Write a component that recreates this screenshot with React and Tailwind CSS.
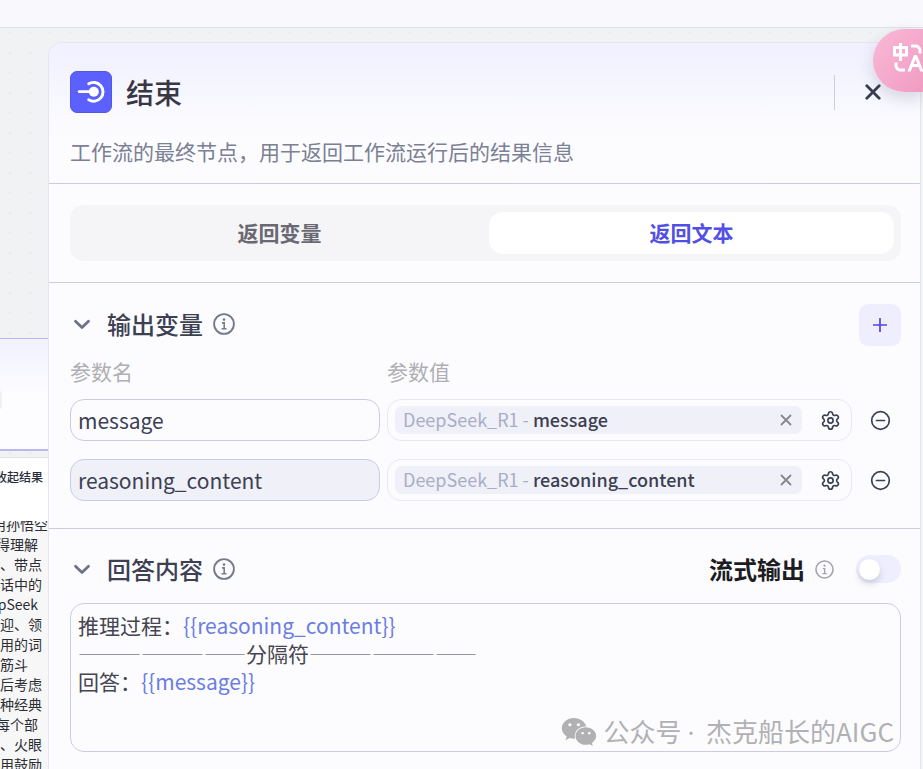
import { useState } from 'react'
import { Settings } from 'lucide-react'
import { FaWeixin } from 'react-icons/fa'
import { RiTranslate } from 'react-icons/ri'

const traceLines = [
  { text: '用孙悟空', pad: 'pr-0' },
  { text: '得理解', pad: 'pr-2.5' },
  { text: '、带点', pad: 'pr-1.5' },
  { text: '话中的', pad: 'pr-1.5' },
  { text: 'pSeek', pad: 'pr-2.5' },
  { text: '迎、领', pad: 'pr-1.5' },
  { text: '用的词', pad: 'pr-1.5' },
  { text: '筋斗', pad: 'pr-5' },
  { text: '后考虑', pad: 'pr-1.5' },
  { text: '种经典', pad: 'pr-1.5' },
  { text: '每个部', pad: 'pr-2.5' },
  { text: '、火眼', pad: 'pr-1.5' },
  { text: '用鼓励', pad: 'pr-1.5' },
]

function ChevronIcon() {
  return (
    <svg width="24" height="24" viewBox="0 0 24 24" fill="none" stroke="#6d7289" strokeWidth="2.8" strokeLinecap="round" strokeLinejoin="round">
      <path d="M5.5 9.2l6.5 6.3 6.5-6.3" />
    </svg>
  )
}

function InfoIcon({ size, className }) {
  return (
    <svg width={size} height={size} viewBox="0 0 24 24" fill="none" stroke="currentColor" strokeWidth="2" className={className}>
      <circle cx="12" cy="12" r="10.8" />
      <circle cx="12" cy="7.2" r="1.4" fill="currentColor" stroke="none" />
      <path d="M9.8 10.8h2.4v6.2M9.4 17.2h5.4" strokeWidth="1.7" />
    </svg>
  )
}

function MinusIcon() {
  return (
    <svg width="21" height="21" viewBox="0 0 21 21" fill="none" stroke="currentColor" strokeWidth="1.7" strokeLinecap="round">
      <circle cx="10.5" cy="10.5" r="8.8" />
      <path d="M6.5 10.5h8" />
    </svg>
  )
}

function EndIcon() {
  return (
    <svg width="42" height="42" viewBox="0 0 42 42" fill="none" stroke="#fff" strokeWidth="2.9" strokeLinecap="round">
      <path d="M9.2 20.6H22" />
      <circle cx="23.8" cy="20.8" r="5" fill="#fff" stroke="none" />
      <path d="M18.7 12.8a9.4 9.4 0 1 1 0 16" />
    </svg>
  )
}

function SectionTitle({ children }) {
  return (
    <div className="flex items-center pb-[2px]">
      <ChevronIcon />
      <h2 className="ml-[13px] text-[24px] font-medium text-[#3c4052]">{children}</h2>
      <InfoIcon size={22} className="ml-[10px] text-[#747990]" />
    </div>
  )
}

function CanvasNodes() {
  return (
    <div className="flex w-12 shrink-0 flex-col overflow-hidden">
      <div className="mt-[310px] flex h-[113px] shrink-0 items-center border-t border-b-2 border-[#bcb8ee] bg-linear-to-b from-[#f1f1ff] to-[#fdfdff] to-50%">
        <div className="mt-3 h-[18px] w-[2px] rounded-r bg-[#f0f0f7]" />
      </div>
      <div className="mt-[6px] flex grow flex-col overflow-hidden border-t border-[#e2e3e8] bg-white">
        <div className="flex shrink-0 justify-end pt-[9px] pr-[5px] pb-[34px] text-[12px] leading-[20px] font-medium whitespace-nowrap text-[#2a2d3c]">
          收起结果
        </div>
        <div className="grow overflow-hidden bg-[#f7f7f7]">
          <div className="-mt-[7px] text-[14px] leading-[20px] text-[#2b2d33]">
            {traceLines.map((line) => (
              <div key={line.text} className={`flex justify-end whitespace-nowrap ${line.pad}`}>
                {line.text}
              </div>
            ))}
          </div>
        </div>
      </div>
    </div>
  )
}

function VariableRow({ variable, highlighted, onRename, onRemove }) {
  return (
    <div className="grid grid-cols-[2fr_3fr_42px] gap-[7px]">
      <input
        aria-label="参数名"
        value={variable.name}
        onChange={(e) => onRename(e.target.value)}
        className={`h-[42px] min-w-0 rounded-[14px] border border-[#cbcce0] px-[7px] text-[21px] text-[#3c4052] outline-none ${
          highlighted ? 'bg-[#f0f0f8]' : 'bg-transparent'
        }`}
      />
      <div className="flex h-[42px] min-w-0 items-center rounded-[14px] border border-[#e7e8f3] pl-[7px]">
        <div className="flex h-7 min-w-0 grow items-center rounded-[7px] bg-[#f0f0f8] pr-[10px] pl-2 text-[18px] leading-[26px]">
          <span className="pb-[2px] whitespace-pre text-[#a9aec6]">DeepSeek_R1 - </span>
          <span className="grow truncate pb-[2px] font-medium text-[#3c4052]">{variable.source}</span>
          <button aria-label="清除" className="text-[#85868f]">
            <svg width="12" height="12" viewBox="0 0 12 12" stroke="currentColor" strokeWidth="1.8" strokeLinecap="round">
              <path d="M1.5 1.5l9 9M10.5 1.5l-9 9" />
            </svg>
          </button>
        </div>
        <button aria-label="设置" className="pr-[10px] pl-[18px] text-[#3c4052]">
          <Settings size={21} strokeWidth={1.9} />
        </button>
      </div>
      <button aria-label="删除" onClick={onRemove} className="flex items-center justify-center text-[#3c4052]">
        <MinusIcon />
      </button>
    </div>
  )
}

export default function App() {
  const [tab, setTab] = useState('返回文本')
  const [streaming, setStreaming] = useState(false)
  const [variables, setVariables] = useState([
    { id: 1, name: 'message', source: 'message' },
    { id: 2, name: 'reasoning_content', source: 'reasoning_content' },
  ])

  const addVariable = () => setVariables((prev) => [...prev, { id: Date.now(), name: '', source: '' }])
  const removeVariable = (id) => setVariables((prev) => prev.filter((v) => v.id !== id))
  const renameVariable = (id, name) => setVariables((prev) => prev.map((v) => (v.id === id ? { ...v, name } : v)))

  return (
    <div
      lang="zh-CN"
      className="relative flex h-screen flex-col overflow-hidden bg-[#f1f2f4] font-['Noto_Sans_CJK_SC',sans-serif]"
    >
      {/* Top bar */}
      <div className="h-7 shrink-0 border-b border-[#dfe0ee] bg-[#f8f8fd]" />

      {/* Canvas */}
      <div className="flex min-h-0 grow bg-[radial-gradient(circle_at_center,#ebecf1_1px,transparent_2px)] bg-size-[20px_20px] bg-position-[0px_-5px]">
        <CanvasNodes />

        {/* Node panel */}
        <div className="mt-[14px] mr-[2px] min-w-0 grow overflow-hidden rounded-t-[14px] border border-b-0 border-[#e4e5f4] bg-[#fcfcff]">
          <div className="border-b border-[#cccde0] bg-linear-to-b from-[#f0f0ff] to-[#fcfcff] to-65% pt-7 pr-[19px] pb-[18px] pl-[21px]">
            <div className="flex items-center">
              <div className="rounded-[7px] border border-[#5459dc] bg-[#5b60ff]">
                <div className="-m-px">
                  <EndIcon />
                </div>
              </div>
              <h1 className="ml-[14px] grow text-[28px] leading-[42px] font-medium text-[#383743]">结束</h1>
              <div className="h-[35px] w-px bg-[#cccde0]" />
              <button aria-label="关闭" className="mr-5 ml-[30px] text-[#3a3d4e]">
                <svg width="16" height="16" viewBox="0 0 16 16" stroke="currentColor" strokeWidth="2.8" strokeLinecap="round">
                  <path d="M1.8 1.8l12.4 12.4M14.2 1.8L1.8 14.2" />
                </svg>
              </button>
            </div>
            <p className="mt-6 text-[21px] leading-[28px] text-[#7b8094]">工作流的最终节点，用于返回工作流运行后的结果信息</p>
          </div>

          <div className="border-b border-[#cccde0] py-[21px] pr-[19px] pl-[21px]">
            <div className="flex gap-[7px] rounded-[14px] bg-[#f5f5f7] p-[7px]">
              {['返回变量', '返回文本'].map((label) => (
                <button
                  key={label}
                  onClick={() => setTab(label)}
                  className={`h-[42px] flex-1 rounded-[14px] text-[21px] font-bold ${
                    tab === label ? 'bg-white text-[#5250e4]' : 'text-[#6a6973]'
                  }`}
                >
                  {label}
                </button>
              ))}
            </div>
          </div>

          {/* Output variables */}
          <div className="border-b border-[#cccde0] pt-[21px] pr-[19px] pb-[27px] pl-[21px]">
            <div className="flex h-[42px] items-center justify-between">
              <SectionTitle>输出变量</SectionTitle>
              <button
                aria-label="添加变量"
                onClick={addVariable}
                className="flex size-[42px] items-center justify-center rounded-[9px] bg-[#eeeeff] text-[#4f46e5]"
              >
                <svg width="14" height="14" viewBox="0 0 14 14" stroke="currentColor" strokeWidth="1.7">
                  <path d="M7 0v14M0 7h14" />
                </svg>
              </button>
            </div>
            <div className="mt-[11px] mb-[14px] grid grid-cols-[2fr_3fr_42px] gap-[7px] text-[21px] leading-[28px] text-[#afafb3]">
              <span>参数名</span>
              <span>参数值</span>
            </div>
            <div className="flex flex-col gap-[18px]">
              {variables.map((v) => (
                <VariableRow
                  key={v.id}
                  variable={v}
                  highlighted={v.id === 2}
                  onRename={(name) => renameVariable(v.id, name)}
                  onRemove={() => removeVariable(v.id)}
                />
              ))}
            </div>
          </div>

          {/* Answer */}
          <div className="pt-5 pr-[19px] pl-[21px]">
            <div className="flex h-[42px] items-center justify-between">
              <SectionTitle>回答内容</SectionTitle>
              <div className="flex items-center pb-[2px]">
                <label htmlFor="streaming" className="text-[24px] font-bold text-[#1c1c23]">
                  流式输出
                </label>
                <InfoIcon size={19} className="ml-[10px] text-[#a3a3ad]" />
                <button
                  id="streaming"
                  role="switch"
                  aria-checked={streaming}
                  onClick={() => setStreaming(!streaming)}
                  className={`ml-[22px] flex h-7 w-[45px] items-center rounded-full px-[3px] ${
                    streaming ? 'justify-end bg-[#5b60ff]' : 'bg-[#eeeeff]'
                  }`}
                >
                  <span className="size-[21px] rounded-full bg-white shadow-[0_4px_7px_rgba(0,0,0,0.15)]" />
                </button>
              </div>
            </div>
            <div
              role="textbox"
              aria-label="回答内容"
              contentEditable
              suppressContentEditableWarning
              className="mt-3 min-h-[149px] rounded-[14px] border border-[#cbcce0] px-[7px] py-[7px] text-[21px] leading-[28px] text-[#45444f] outline-none"
            >
              <p>
                推理过程：<span className="text-[#6b7de3]">{'{{reasoning_content}}'}</span>
              </p>
              <p>
                <span className="text-[#96969e]">————————</span>分隔符<span className="text-[#96969e]">————————</span>
              </p>
              <p>
                回答：<span className="text-[#6b7de3]">{'{{message}}'}</span>
              </p>
            </div>
          </div>
        </div>
      </div>

      {/* Translate bubble */}
      <button
        aria-label="翻译"
        className="absolute top-[29px] right-0 flex h-[63px] w-[50px] items-center overflow-hidden rounded-l-full bg-linear-to-br from-[#f9b9d6] to-[#f09cc4] pb-[6px] pl-[17px] text-white shadow-[0_6px_16px_rgba(60,60,90,0.18)]"
      >
        <RiTranslate size={36} className="shrink-0" />
      </button>

      {/* Account signature */}
      <div className="pointer-events-none absolute right-[29px] bottom-[18px] flex items-center text-[26px] leading-[38px] text-[#b1b1b3]">
        <FaWeixin size={36} className="mr-[7px]" />
        <span className="whitespace-pre">
          公众号 <span className="font-['Noto_Sans']">·</span>{'  '}杰克船长的AIGC
        </span>
      </div>
    </div>
  )
}
